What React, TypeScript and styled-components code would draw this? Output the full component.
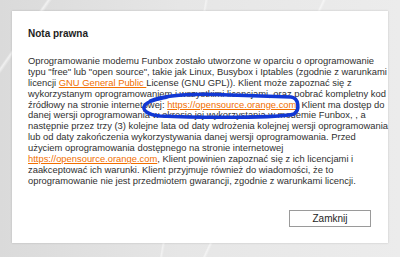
import * as React from "react";
import styled, { createGlobalStyle } from "styled-components";

const GlobalStyle = createGlobalStyle`
    html, body {
        margin: 0;
        padding: 0;
    }
    body {
        width: 400px;
        height: 257px;
        overflow: hidden;
        font-family: "Liberation Sans", Arial, sans-serif;
    }
`;

const Page = styled.div`
    position: relative;
    width: 400px;
    height: 257px;
    box-sizing: border-box;
    padding: 11px 12px 14px 12px;
    background:
        linear-gradient(115deg, transparent 0 62%, rgba(255, 255, 255, 0.55) 62.3%, transparent 62.8%),
        linear-gradient(100deg, transparent 0 46%, rgba(255, 255, 255, 0.5) 46.3%, transparent 46.8%),
        linear-gradient(125deg, transparent 0 8%, rgba(255, 255, 255, 0.6) 8.4%, transparent 9%),
        linear-gradient(90deg, #dadada 0%, #e6e6e6 45%, #ececec 100%);
`;

const Dialog = styled.div`
    width: 376px;
    height: 232px;
    box-sizing: border-box;
    background: #fff;
    box-shadow: 0 0 2px rgba(0, 0, 0, 0.18);
    padding: 16px 17px 16px 16px;
    display: flex;
    flex-direction: column;
`;

const Title = styled.h2`
    margin: 0;
    font-size: 10px;
    line-height: 13px;
    font-weight: bold;
    color: #1e1e1e;
`;

const Body = styled.div`
    margin-top: 16px;
    font-size: 9.4px;
    color: #303030;
    white-space: nowrap;
`;

const Line = styled.span`
    display: block;
    height: 10.9px;
    line-height: 10.9px;
`;

const Link = styled.a`
    color: #f16e00;
    text-decoration: underline;
`;

const Footer = styled.div`
    margin-top: auto;
    display: flex;
    justify-content: flex-end;
`;

const Button = styled.button`
    width: 82px;
    height: 17px;
    box-sizing: border-box;
    border: 1px solid #9a9a9a;
    background: #fff;
    color: #1e1e1e;
    font-family: "Liberation Sans", Arial, sans-serif;
    font-size: 10px;
    padding: 0;
    cursor: pointer;
`;

const Marker = styled.svg`
    position: absolute;
    left: 0;
    top: 0;
    width: 400px;
    height: 257px;
    pointer-events: none;
`;

const URL = "https://opensource.orange.com";

export default function App() {
    return (
        <>
            <GlobalStyle />
            <Page>
                <Dialog>
                    <Title>Nota prawna</Title>
                    <Body>
                        <Line>Oprogramowanie modemu Funbox zostało utworzone w oparciu o oprogramowanie</Line>
                        <Line>typu "free" lub "open source", takie jak Linux, Busybox i Iptables (zgodnie z warunkami</Line>
                        <Line>licencji <Link href="#">GNU General Public </Link>License (GNU GPL)). Klient może zapoznać się z</Line>
                        <Line>wykorzystanym oprogramowaniem i wszystkimi licencjami, oraz pobrać kompletny kod</Line>
                        <Line>źródłowy na stronie internetowej: <Link href="#">{URL}</Link>. Klient ma dostęp do</Line>
                        <Line>danej wersji oprogramowania w okresie jej wykorzystania w modemie Funbox, , a</Line>
                        <Line>następnie przez trzy (3) kolejne lata od daty wdrożenia kolejnej wersji oprogramowania</Line>
                        <Line>lub od daty zakończenia wykorzystywania danej wersji oprogramowania. Przed</Line>
                        <Line>użyciem oprogramowania dostępnego na stronie internetowej</Line>
                        <Line><Link href="#">{URL}</Link>, Klient powinien zapoznać się z ich licencjami i</Line>
                        <Line>zaakceptować ich warunki. Klient przyjmuje również do wiadomości, że to</Line>
                        <Line>oprogramowanie nie jest przedmiotem gwarancji, zgodnie z warunkami licencji.</Line>
                    </Body>
                    <Footer>
                        <Button>Zamknij</Button>
                    </Footer>
                </Dialog>
                <Marker viewBox="0 0 400 257">
                    <path
                        d="M 150 101 C 165 95, 190 93, 230 95 L 291 97 C 299 98, 300 110, 294 114 C 280 118, 200 118, 160 116 C 148 115, 141 110, 145 105 C 148 101, 156 99, 168 97"
                        fill="none"
                        stroke="#1238d4"
                        strokeWidth={3.5}
                        strokeLinecap="round"
                        strokeLinejoin="round"
                    />
                </Marker>
            </Page>
        </>
    );
}
